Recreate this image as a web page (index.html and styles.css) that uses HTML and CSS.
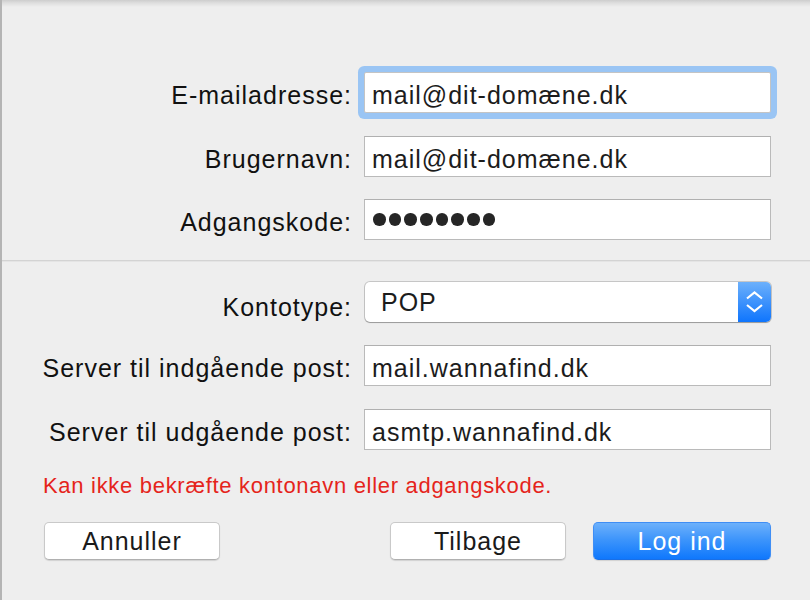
FILE: index.html
```html
<!DOCTYPE html>
<html lang="da">
<head>
<meta charset="utf-8">
<title>Tilføj konto</title>
<link rel="stylesheet" href="styles.css">
</head>
<body>
<div class="window">
  <div class="form form-top">
    <label class="label">E-mailadresse:</label>
    <div class="field focused">mail@dit-domæne.dk</div>
    <label class="label">Brugernavn:</label>
    <div class="field">mail@dit-domæne.dk</div>
    <label class="label">Adgangskode:</label>
    <div class="field dots"><span></span><span></span><span></span><span></span><span></span><span></span><span></span><span></span></div>
  </div>
  <div class="separator"></div>
  <div class="form form-bottom">
    <label class="label label-popup">Kontotype:</label>
    <div class="popup">
      <span class="popup-value">POP</span>
      <span class="stepper">
        <svg width="33" height="40" viewBox="0 0 33 40">
          <defs>
            <linearGradient id="sg" x1="0" y1="0" x2="0" y2="1">
              <stop offset="0" stop-color="#6cb0fb"/>
              <stop offset="1" stop-color="#0f75fd"/>
            </linearGradient>
          </defs>
          <rect x="0" y="0" width="33" height="40" fill="url(#sg)"/>
          <path d="M9 16.5 L16.5 10.5 L24 16.5" fill="none" stroke="#fff" stroke-width="2.2"/>
          <path d="M9 23 L16.5 29 L24 23" fill="none" stroke="#fff" stroke-width="2.2"/>
        </svg>
      </span>
    </div>
    <label class="label">Server til indgående post:</label>
    <div class="field">mail.wannafind.dk</div>
    <label class="label">Server til udgående post:</label>
    <div class="field">asmtp.wannafind.dk</div>
  </div>
  <p class="error">Kan ikke bekræfte kontonavn eller adgangskode.</p>
  <div class="buttons">
    <button class="btn">Annuller</button>
    <button class="btn btn-back">Tilbage</button>
    <button class="btn btn-primary">Log ind</button>
  </div>
</div>
</body>
</html>
```
FILE: styles.css
```css
html, body {
  margin: 0;
  padding: 0;
}
body {
  width: 810px;
  height: 600px;
  overflow: hidden;
  background: #eeeeee;
  font-family: "Liberation Sans", Arial, sans-serif;
}
.window {
  box-sizing: border-box;
  height: 600px;
  border-left: 2px solid #b4b4b4;
  background: linear-gradient(to bottom, #cdcdcd 0px, #dedede 3px, #eeeeee 7px, #eeeeee 100%);
}
.form {
  display: grid;
  grid-template-columns: 350px 407px;
  column-gap: 12px;
}
.form-top {
  padding-top: 72px;
  grid-auto-rows: 41px;
  row-gap: 22.5px;
}
.form-bottom {
  padding-top: 20px;
  grid-template-rows: 40px 41px 41px;
  row-gap: 23px;
}
.label {
  box-sizing: border-box;
  text-align: right;
  font-size: 25px;
  letter-spacing: 1px;
  color: #111;
  padding-top: 6px;
  line-height: 34px;
  white-space: nowrap;
}
.label-popup {
  padding-top: 10px;
  line-height: 30px;
}
.field {
  box-sizing: border-box;
  height: 41px;
  background: #fff;
  border: 1px solid #bababa;
  border-top-color: #b0b0b0;
  padding: 5px 7px 0;
  line-height: 34px;
  font-size: 25px;
  letter-spacing: 1px;
  color: #1c1c1c;
  white-space: nowrap;
}
.focused {
  border-radius: 2px;
  border-color: #c4c4c4;
  box-shadow: 0 0 0 6px #9ac5f4;
}
.dots {
  display: flex;
  align-items: center;
  gap: 3.2px;
  padding: 0 0 0 8px;
}
.dots span {
  width: 12.5px;
  height: 12.5px;
  border-radius: 50%;
  background: #262626;
}
.separator {
  margin-top: 20px;
  height: 1px;
  background: #d3d3d3;
  border-bottom: 1px solid #e4e4e4;
}
.popup {
  box-sizing: border-box;
  height: 40px;
  display: flex;
  background: #fff;
  border-radius: 5px;
  overflow: hidden;
  box-shadow: 0 0 0 1px rgba(0, 0, 0, 0.17), 0 1px 1px rgba(0, 0, 0, 0.22);
  margin-left: 1px;
}
.popup-value {
  flex: 1;
  padding: 2px 0 0 16px;
  line-height: 36px;
  font-size: 25px;
  letter-spacing: 1px;
  color: #1c1c1c;
}
.stepper {
  width: 33px;
  height: 40px;
  display: block;
}
.stepper svg {
  display: block;
}
.error {
  margin: 24px 0 0;
  padding-left: 41px;
  font-size: 22px;
  line-height: 24px;
  letter-spacing: 0.7px;
  color: #e5241b;
  white-space: nowrap;
}
.buttons {
  display: flex;
  margin-top: 23.5px;
  padding: 0 39px 0 42px;
}
.btn {
  box-sizing: border-box;
  width: 176px;
  height: 38px;
  margin: 0;
  padding: 1px 0 0;
  line-height: 35px;
  font-family: "Liberation Sans", Arial, sans-serif;
  font-size: 25px;
  letter-spacing: 1px;
  color: #1a1a1a;
  background: #fff;
  border: 1px solid #c9c9c9;
  border-bottom-color: #b0b0b0;
  border-radius: 5px;
  box-shadow: 0 1px 1px rgba(0, 0, 0, 0.12);
}
.btn-back {
  margin-left: auto;
}
.btn-primary {
  width: 178px;
  margin-left: 27px;
  color: #fff;
  border: 1px solid #3f8ef5;
  border-bottom-color: #1a6fe6;
  background: linear-gradient(to bottom, #6db1fb 0%, #3e95fb 45%, #0f78fd 100%);
}
```
